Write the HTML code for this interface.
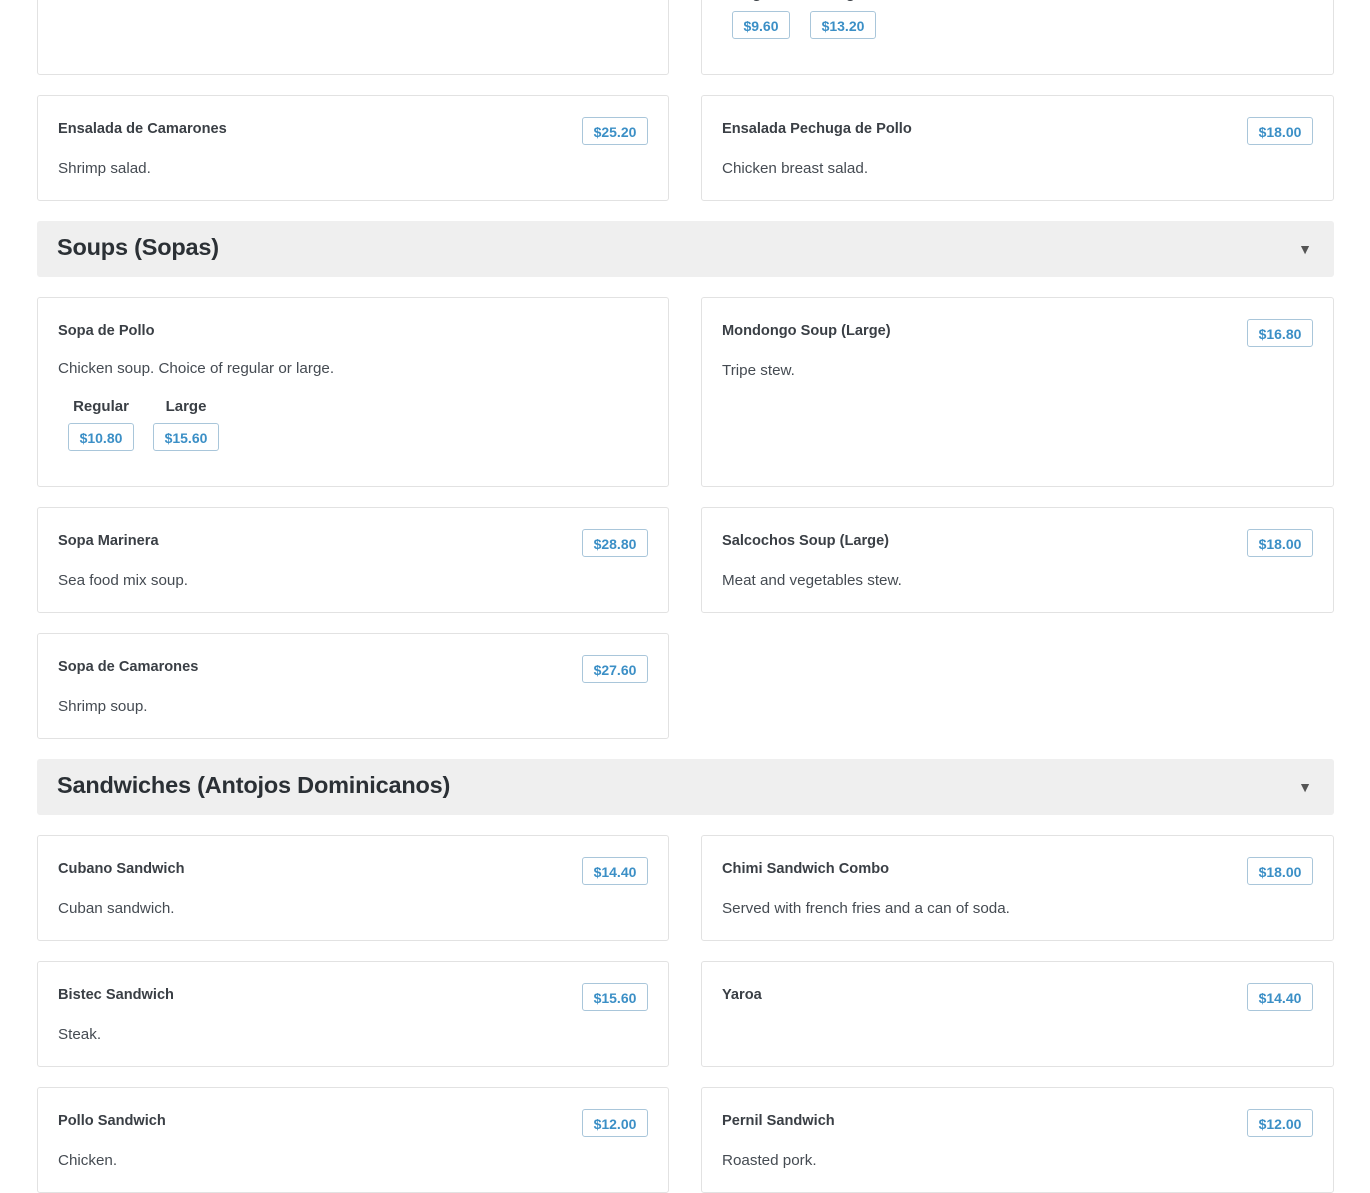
<!DOCTYPE html>
<html><head><meta charset="utf-8"><style>
body{margin:0;width:1370px;height:1160px;overflow:hidden;background:#fff;font-family:"Liberation Sans",sans-serif;color:#343a40;position:relative}
.c{position:absolute;border:1px solid #e2e2e2;border-radius:3px;box-sizing:border-box;background:#fff}
.L{left:37px;width:632px}.R{left:701px;width:633px}
.n{position:absolute;left:20px;top:25px !important;font-size:14.6px;font-weight:bold;color:#3a3f45;white-space:nowrap}
.d{position:absolute;left:20px;font-size:15.2px;color:#454b52;white-space:nowrap}
.p{position:absolute;border:1px solid #a9c6da;border-radius:3px;color:#3b8fc6;font-size:14px;font-weight:bold;height:28px;line-height:28px;text-align:center;box-sizing:border-box;background:#fff}
.pr{right:20px;top:21px;width:66px}
.lab{position:absolute;font-size:15px;font-weight:bold;color:#3a3f45;text-align:center;white-space:nowrap}
.s{position:absolute;left:37px;width:1297px;height:56px;background:#efefef;border-radius:3px}
.s h2{margin:0;position:absolute;left:20px;top:13px;font-size:23.5px;font-weight:bold;color:#2b3035;letter-spacing:-0.2px}
.s i{position:absolute;right:22px;top:20px;font-style:normal;font-size:14px;color:#555}
</style></head><body>

<div class="c L" style="top:-20px;height:95px"></div>
<div class="c R" style="top:-20px;height:95px">
<div class="lab" style="left:30px;width:58px;top:4px">Regular</div>
<div class="lab" style="left:108px;width:66px;top:4px">Large</div>
<div class="p" style="left:30px;top:30px;width:58px">$9.60</div>
<div class="p" style="left:108px;top:30px;width:66px">$13.20</div>
</div>

<div class="c L" style="top:95px;height:106px"><div class="n">Ensalada de Camarones</div><div class="d" style="top:64px">Shrimp salad.</div><div class="p pr">$25.20</div></div>
<div class="c R" style="top:95px;height:106px"><div class="n">Ensalada Pechuga de Pollo</div><div class="d" style="top:64px">Chicken breast salad.</div><div class="p pr">$18.00</div></div>

<div class="s" style="top:221px"><h2>Soups (Sopas)</h2><i>▼</i></div>

<div class="c L" style="top:297px;height:190px"><div class="n">Sopa de Pollo</div><div class="d" style="top:62px">Chicken soup. Choice of regular or large.</div>
<div class="lab" style="left:30px;width:66px;top:100px">Regular</div>
<div class="lab" style="left:115px;width:66px;top:100px">Large</div>
<div class="p" style="left:30px;top:125px;width:66px">$10.80</div>
<div class="p" style="left:115px;top:125px;width:66px">$15.60</div>
</div>
<div class="c R" style="top:297px;height:190px"><div class="n">Mondongo Soup (Large)</div><div class="d" style="top:64px">Tripe stew.</div><div class="p pr">$16.80</div></div>

<div class="c L" style="top:507px;height:106px"><div class="n">Sopa Marinera</div><div class="d" style="top:64px">Sea food mix soup.</div><div class="p pr">$28.80</div></div>
<div class="c R" style="top:507px;height:106px"><div class="n">Salcochos Soup (Large)</div><div class="d" style="top:64px">Meat and vegetables stew.</div><div class="p pr">$18.00</div></div>

<div class="c L" style="top:633px;height:106px"><div class="n">Sopa de Camarones</div><div class="d" style="top:64px">Shrimp soup.</div><div class="p pr">$27.60</div></div>

<div class="s" style="top:759px"><h2>Sandwiches (Antojos Dominicanos)</h2><i>▼</i></div>

<div class="c L" style="top:835px;height:106px"><div class="n">Cubano Sandwich</div><div class="d" style="top:64px">Cuban sandwich.</div><div class="p pr">$14.40</div></div>
<div class="c R" style="top:835px;height:106px"><div class="n">Chimi Sandwich Combo</div><div class="d" style="top:64px">Served with french fries and a can of soda.</div><div class="p pr">$18.00</div></div>

<div class="c L" style="top:961px;height:106px"><div class="n">Bistec Sandwich</div><div class="d" style="top:64px">Steak.</div><div class="p pr">$15.60</div></div>
<div class="c R" style="top:961px;height:106px"><div class="n">Yaroa</div><div class="p pr">$14.40</div></div>

<div class="c L" style="top:1087px;height:106px"><div class="n">Pollo Sandwich</div><div class="d" style="top:64px">Chicken.</div><div class="p pr">$12.00</div></div>
<div class="c R" style="top:1087px;height:106px"><div class="n">Pernil Sandwich</div><div class="d" style="top:64px">Roasted pork.</div><div class="p pr">$12.00</div></div>

</body></html>
